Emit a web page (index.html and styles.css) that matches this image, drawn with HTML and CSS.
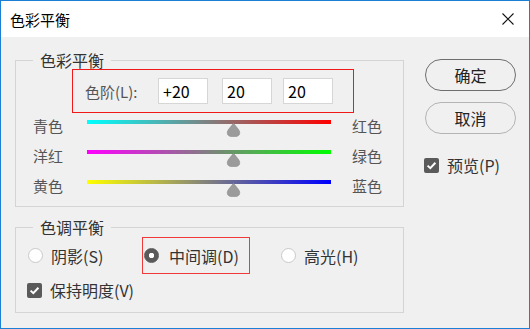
FILE: index.html
```html
<!DOCTYPE html>
<html lang="zh-CN">
<head>
<meta charset="utf-8">
<title>色彩平衡</title>
<link rel="stylesheet" href="styles.css">
</head>
<body>
<div class="window">
  <div class="titlebar">
    <span class="title">色彩平衡</span>
    <svg class="close" width="12" height="12" viewBox="0 0 12 12"><path d="M0.5 0.5 L11.5 11.5 M11.5 0.5 L0.5 11.5" stroke="#111" stroke-width="1.1" fill="none"/></svg>
  </div>
  <div class="content">
    <div class="main">
      <fieldset class="group g1">
        <legend>色彩平衡</legend>
        <div class="levels">
          <span class="levels-label">色阶(L):</span>
          <input class="num n1" value="+20">
          <input class="num n2" value="20">
          <input class="num n3" value="20">
        </div>
        <div class="sliders">
          <div class="srow">
            <span class="sl">青色</span>
            <div class="track"><div class="bar cr"></div><svg class="thumb" style="left: calc(60% - 7.5px)" width="15" height="14" viewBox="0 0 15 14"><path d="M7.5 0.3 L12.6 6.6 Q14.6 9.2 13.4 11.6 Q12.2 13.8 7.5 13.8 Q2.8 13.8 1.6 11.6 Q0.4 9.2 2.4 6.6 Z" fill="#9b9b9b" stroke="#8c8c8c" stroke-width="0.6"/></svg></div>
            <span class="sr">红色</span>
          </div>
          <div class="srow">
            <span class="sl">洋红</span>
            <div class="track"><div class="bar mg"></div><svg class="thumb" style="left: calc(60% - 7.5px)" width="15" height="14" viewBox="0 0 15 14"><path d="M7.5 0.3 L12.6 6.6 Q14.6 9.2 13.4 11.6 Q12.2 13.8 7.5 13.8 Q2.8 13.8 1.6 11.6 Q0.4 9.2 2.4 6.6 Z" fill="#9b9b9b" stroke="#8c8c8c" stroke-width="0.6"/></svg></div>
            <span class="sr">绿色</span>
          </div>
          <div class="srow">
            <span class="sl">黄色</span>
            <div class="track"><div class="bar yb"></div><svg class="thumb" style="left: calc(60% - 7.5px)" width="15" height="14" viewBox="0 0 15 14"><path d="M7.5 0.3 L12.6 6.6 Q14.6 9.2 13.4 11.6 Q12.2 13.8 7.5 13.8 Q2.8 13.8 1.6 11.6 Q0.4 9.2 2.4 6.6 Z" fill="#9b9b9b" stroke="#8c8c8c" stroke-width="0.6"/></svg></div>
            <span class="sr">蓝色</span>
          </div>
        </div>
      </fieldset>
      <fieldset class="group g2">
        <legend>色调平衡</legend>
        <div class="tones">
          <label class="opt o1"><span class="radio"></span><span class="otext">阴影(S)</span></label>
          <label class="opt o2"><span class="radio on"></span><span class="otext">中间调(D)</span></label>
          <label class="opt o3"><span class="radio"></span><span class="otext">高光(H)</span></label>
        </div>
        <label class="check keep"><span class="cbox"><svg width="15" height="15" viewBox="0 0 15 15"><path d="M3.6 7.6 L6.3 10.2 L11.4 4.8" stroke="#fff" stroke-width="2" fill="none"/></svg></span><span class="ctext">保持明度(V)</span></label>
      </fieldset>
    </div>
    <div class="side">
      <button class="btn primary">确定</button>
      <button class="btn secondary">取消</button>
      <label class="check preview"><span class="cbox"><svg width="15" height="15" viewBox="0 0 15 15"><path d="M3.6 7.6 L6.3 10.2 L11.4 4.8" stroke="#fff" stroke-width="2" fill="none"/></svg></span><span class="ctext">预览(P)</span></label>
    </div>
  </div>
</div>
</body>
</html>
```
FILE: styles.css
```css
* { box-sizing: border-box; }
html, body { margin: 0; padding: 0; }
body {
  font-family: "Noto Sans CJK SC", "Noto Sans", sans-serif;
  background: #f0f0f0;
  color: #333;
}
.window {
  width: 530px;
  height: 329px;
  border: 1px solid #1b7fd5;
  background: #f0f0f0;
  display: flex;
  flex-direction: column;
}
.titlebar {
  height: 36px;
  background: #fff;
  display: flex;
  align-items: center;
  justify-content: space-between;
  padding: 0 15px 0 9px;
}
.title { font-size: 15px; line-height: 15px; color: #000; }
.close { display: block; }
.content {
  display: flex;
  padding: 15px 0 0 14px;
}
.main { width: 389px; display: flex; flex-direction: column; }
.group {
  margin: 0;
  padding: 0;
  border: 1px solid #d4d4d4;
  min-width: 0;
}
.group legend {
  margin-left: 17px;
  padding: 0 7px;
  font-size: 16px;
  line-height: 16px;
  color: #333;
}
.levels {
  margin: 1px 0 0 56px;
  width: 282px;
  height: 44px;
  border: 1px solid #f01818;
  display: flex;
  align-items: center;
  padding-left: 12px;
}
.levels-label {
  width: 73px;
  flex: none;
  font-size: 15px;
  line-height: 15px;
  color: #555;
}
.num {
  width: 50px;
  height: 26px;
  border: 1px solid #d6d6d6;
  background: #fff;
  font-family: inherit;
  font-size: 16px;
  color: #000;
  padding: 0 0 0 4px;
  margin: 0;
  outline: none;
}
.n2 { margin-left: 14px; }
.n3 { margin-left: 11px; }
.sliders { margin-top: 7px; }
.srow {
  display: flex;
  align-items: flex-start;
  height: 30px;
  padding-left: 17px;
}
.srow:last-child { height: 26px; }
.sl, .sr {
  font-size: 15px;
  line-height: 15px;
  color: #555;
  margin-top: -2px;
}
.sl { width: 54px; flex: none; }
.sr { margin-left: 21px; }
.track { position: relative; width: 244px; height: 18px; flex: none; }
.bar { height: 4px; }
.cr { background: linear-gradient(to right, #00ffff, #ff0000); }
.mg { background: linear-gradient(to right, #ff00ff, #00ff00); }
.yb { background: linear-gradient(to right, #ffff00, #0000ff); }
.thumb { position: absolute; top: 3px; display: block; }
.g2 { margin-top: 12px; }
.tones {
  display: flex;
  align-items: center;
  margin-top: 2px;
  padding-left: 12px;
}
.opt {
  display: flex;
  align-items: center;
  font-size: 16px;
  line-height: 16px;
  color: #333;
}
.o1 { width: 114px; }
.o1 .radio, .o3 .radio { margin-right: 8px; }
.o2 {
  width: 108px;
  height: 37px;
  border: 1px solid #f03a3a;
  padding-left: 1px;
}
.o2 .radio { margin-right: 10px; }
.o3 { margin-left: 31px; }
.radio {
  width: 15px;
  height: 15px;
  border-radius: 50%;
  border: 1px solid #c9c9c9;
  background: #fff;
  flex: none;
}
.radio.on {
  border-color: #5a5a5a;
  background: radial-gradient(circle, #fff 0 2.4px, #5a5a5a 3px);
}
.check {
  display: flex;
  align-items: center;
  font-size: 16px;
  line-height: 16px;
  color: #333;
}
.cbox {
  width: 15px;
  height: 15px;
  border-radius: 2px;
  background: #5a5a5a;
  margin-right: 8px;
  flex: none;
}
.cbox svg { display: block; }
.keep { margin: 8px 0 0 11px; padding-bottom: 14px; }
.side {
  display: flex;
  flex-direction: column;
  align-items: flex-start;
  padding: 7px 0 0 21px;
}
.btn {
  width: 91px;
  height: 32px;
  border-radius: 16px;
  background: #f0f0f0;
  font-family: inherit;
  font-size: 16px;
  line-height: 16px;
  color: #222;
  padding: 0;
  margin: 0;
}
.primary { border: 1px solid #6e6e6e; }
.secondary { border: 1px solid #b4b4b4; margin-top: 11px; }
.preview { margin: 23px 0 0 -1px; }
```
